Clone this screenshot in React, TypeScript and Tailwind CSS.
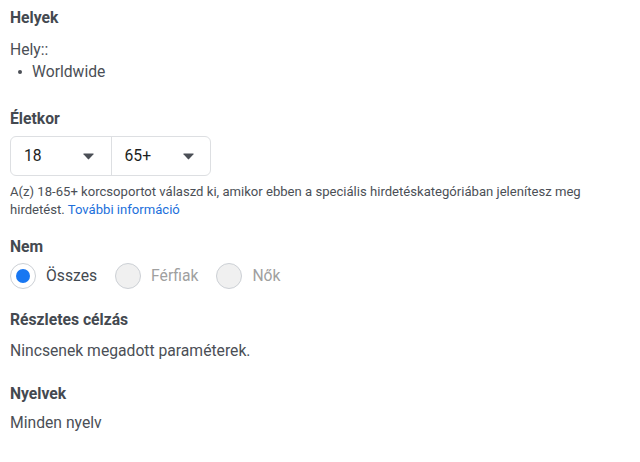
import React from "react";

function Caret() {
  return (
    <svg width="11" height="7" viewBox="0 0 11 7" className="block">
      <path d="M0.8 0.5 H10.2 Q11 0.5 10.5 1.2 L6.1 6.1 Q5.5 6.7 4.9 6.1 L0.5 1.2 Q0 0.5 0.8 0.5 Z" fill="#4b4f56" />
    </svg>
  );
}

function Radio({ label, checked, disabled }: { label: string; checked?: boolean; disabled?: boolean }) {
  return (
    <div className="flex items-center gap-[10px] mr-[18px]">
      <div
        className={
          "w-[26px] h-[26px] rounded-full border flex items-center justify-center " +
          (disabled ? "border-[#ccd0d5] bg-[#f0f0f0]" : "border-[#ccd0d5] bg-white")
        }
      >
        {checked && <div className="w-[14px] h-[14px] rounded-full bg-[#1877f2]" />}
      </div>
      <span className={"text-[15.7px] " + (disabled ? "text-[#a0a0a0]" : "text-[#444950]")}>{label}</span>
    </div>
  );
}

export default function App() {
  return (
    <div
      className="w-[640px] h-[462px] bg-white px-[10px] pt-[8px] text-[#444950]"
      style={{ fontFamily: "Roboto, 'Noto Sans', sans-serif" }}
    >
      <div className="text-[15.7px] font-bold leading-[20px]">Helyek</div>
      <div className="mt-[11px] text-[15.7px] leading-[22px] text-[#4b4f56]">Hely::</div>
      <ul className="text-[15.7px] leading-[22px] text-[#4b4f56]">
        <li className="flex items-center">
          <span className="w-[22px] pl-[8px] flex items-center">
            <span className="block w-[4px] h-[4px] rounded-full bg-[#4b4f56]" />
          </span>
          <span>Worldwide</span>
        </li>
      </ul>

      <div className="mt-[26px] text-[15.7px] font-bold leading-[20px]">Életkor</div>
      <div className="mt-[7px] flex w-[201px] h-[40px] border border-[#dddfe2] rounded-[6px]">
        <div className="flex-1 flex items-center justify-between pl-[13px] pr-[17px] border-r border-[#dddfe2]">
          <span className="text-[15.7px] text-[#1c1e21]">18</span>
          <Caret />
        </div>
        <div className="flex-1 flex items-center justify-between pl-[13px] pr-[16px]">
          <span className="text-[15.7px] text-[#1c1e21]">65+</span>
          <Caret />
        </div>
      </div>
      <div className="mt-[7px] text-[13.1px] leading-[18px] text-[#4b4f56]">
        A(z) 18-65+ korcsoportot válaszd ki, amikor ebben a speciális hirdetéskategóriában jelenítesz meg
        <br />
        hirdetést. <span className="text-[#216fdb]">További információ</span>
      </div>

      <div className="mt-[18px] text-[15.7px] font-bold leading-[20px]">Nem</div>
      <div className="mt-[6px] flex items-center">
        <Radio label="Összes" checked />
        <Radio label="Férfiak" disabled />
        <Radio label="Nők" disabled />
      </div>

      <div className="mt-[21px] text-[15.7px] font-bold leading-[20px]">Részletes célzás</div>
      <div className="mt-[11px] text-[15.7px] leading-[20px] text-[#4b4f56]">Nincsenek megadott paraméterek.</div>

      <div className="mt-[23px] text-[15.7px] font-bold leading-[20px]">Nyelvek</div>
      <div className="mt-[9px] text-[15.7px] leading-[20px] text-[#4b4f56]">Minden nyelv</div>
    </div>
  );
}
